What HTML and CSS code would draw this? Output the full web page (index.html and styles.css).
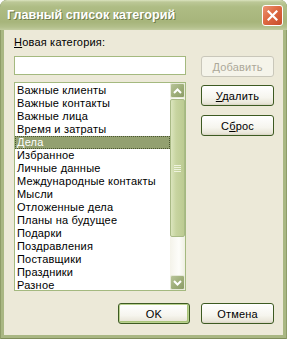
FILE: index.html
```html
<!DOCTYPE html>
<html lang="ru">

<head>
  <meta charset="UTF-8" />
  <title>Главный список категорий</title>
  <link rel="stylesheet" href="styles.css">
</head>

<body>
  <div class="window">
    <div class="titlebar">
      <span class="title">Главный список категорий</span>
      <span class="close">
        <svg width="11" height="11" viewBox="0 0 11 11">
          <path d="M1.5 1.5 L9.5 9.5 M9.5 1.5 L1.5 9.5" stroke="#fff" stroke-width="2.2" stroke-linecap="square" />
        </svg>
      </span>
    </div>

    <div class="client">
      <div class="main">
        <div class="left">
          <label class="label" for="category"><u>Н</u>овая категория:</label>
          <input class="field" type="text" id="category" />

          <div class="listbox">
            <ul class="items">
              <li>Важные клиенты</li>
              <li>Важные контакты</li>
              <li>Важные лица</li>
              <li>Время и затраты</li>
              <li class="selected">Дела</li>
              <li>Избранное</li>
              <li>Личные данные</li>
              <li>Международные контакты</li>
              <li>Мысли</li>
              <li>Отложенные дела</li>
              <li>Планы на будущее</li>
              <li>Подарки</li>
              <li>Поздравления</li>
              <li>Поставщики</li>
              <li>Праздники</li>
              <li>Разное</li>
            </ul>
            <div class="scrollbar">
              <div class="sb-btn">
                <svg width="9" height="6" viewBox="0 0 9 6">
                  <path d="M1 5 L4.5 1.5 L8 5" fill="none" stroke="#fff" stroke-width="2" />
                </svg>
              </div>
              <div class="sb-track">
                <div class="sb-thumb"><span class="grip"></span></div>
              </div>
              <div class="sb-btn">
                <svg width="9" height="6" viewBox="0 0 9 6">
                  <path d="M1 1 L4.5 4.5 L8 1" fill="none" stroke="#fff" stroke-width="2" />
                </svg>
              </div>
            </div>
          </div>
        </div>

        <div class="right">
          <button class="btn" disabled><u>Д</u>обавить</button>
          <button class="btn"><u>У</u>далить</button>
          <button class="btn reset">С<u>б</u>рос</button>
        </div>
      </div>

      <div class="footer">
        <button class="btn ok">OK</button>
        <button class="btn cancel">Отмена</button>
      </div>
    </div>
  </div>
</body>

</html>
```

FILE: styles.css
```css
body {
  margin: 0;
  background: #ffffff;
  font-family: "Liberation Sans", Arial, sans-serif;
  font-size: 11px;
  color: #000;
}

.window {
  width: 287px;
  height: 339px;
  background: #a9b783;
  border-radius: 7px 7px 0 0;
  overflow: hidden;
  box-shadow: inset 1px 0 0 #8e9c68, inset -1px 0 0 #8e9c68, inset 0 -1px 0 #7f8d5a;
}

.titlebar {
  height: 30px;
  display: flex;
  align-items: flex-start;
  justify-content: space-between;
  padding: 0 4px 0 7px;
  box-sizing: border-box;
  border-radius: 7px 7px 0 0;
  background: linear-gradient(to bottom, #dbe3c0 0, #bcc897 2px, #aebc84 7px, #a7b57b 22px, #b2bf8b 27px, #c2cc9f 30px);
}

.title {
  margin-top: 8px;
  font-weight: bold;
  font-size: 12.6px;
  line-height: 15px;
  color: #fff;
  text-shadow: 1px 1px 0 #6f7c4a;
}

.close {
  margin-top: 5px;
  width: 21px;
  height: 21px;
  box-sizing: border-box;
  border: 1px solid #fff;
  border-radius: 3px;
  background: linear-gradient(135deg, #ec9473 0, #de6a42 45%, #c84d2a 100%);
  display: flex;
  align-items: center;
  justify-content: center;
}

.client {
  margin: 0 4px;
  height: 305px;
  background: #ece9d8;
  padding: 6px 9px 0 10px;
  box-sizing: border-box;
}

.main {
  display: flex;
  gap: 15px;
}

.left {
  width: 172px;
}

.label {
  display: block;
  line-height: 13px;
  letter-spacing: 0.2px;
}

.field {
  display: block;
  width: 172px;
  height: 19px;
  margin: 7px 0 0;
  box-sizing: border-box;
  border: 1px solid #a4b97f;
  background: #fff;
  padding: 0 2px;
  font: inherit;
}

.listbox {
  display: flex;
  margin-top: 7px;
  width: 172px;
  height: 209px;
  box-sizing: border-box;
  border: 1px solid #a4b97f;
  background: #fff;
}

.items {
  flex: 1;
  list-style: none;
  margin: 0;
  padding: 1px 0 0;
  overflow: hidden;
}

.items li {
  line-height: 13px;
  height: 13px;
  padding-left: 2px;
  white-space: nowrap;
  letter-spacing: 0.2px;
}

.items .selected {
  background: #93a070;
  color: #fff;
  outline: 1px dotted #4a5530;
  outline-offset: -1px;
}

.scrollbar {
  width: 15px;
  display: flex;
  flex-direction: column;
  background: linear-gradient(to right, #f4f3ea, #fdfdfa 60%, #eef0e2);
}

.sb-btn {
  height: 15px;
  box-sizing: border-box;
  border: 1px solid #e6ead9;
  border-radius: 2px;
  background: linear-gradient(135deg, #b8c499 0, #9dad78 55%, #8c9c68 100%);
  display: flex;
  align-items: center;
  justify-content: center;
}

.sb-track {
  flex: 1;
}

.sb-thumb {
  margin-top: 1px;
  height: 138px;
  box-sizing: border-box;
  border: 1px solid #a9ba86;
  border-radius: 2px;
  background: linear-gradient(to right, #dbe5bd 0, #c7d4a0 40%, #bccb92 100%);
  display: flex;
  align-items: center;
  justify-content: center;
}

.grip {
  width: 7px;
  height: 7px;
  background: repeating-linear-gradient(to bottom, #eef3dd 0, #eef3dd 1px, transparent 1px, transparent 2px);
}

.right {
  width: 73px;
  padding-top: 20px;
  display: flex;
  flex-direction: column;
  gap: 8px;
}

.btn {
  width: 73px;
  height: 21px;
  box-sizing: border-box;
  border: 1px solid #3d5a22;
  border-radius: 3px;
  background: linear-gradient(to bottom, #ffffff 0, #f6f5ee 60%, #e9e6d9 90%, #d8d3c3 100%);
  font: inherit;
  letter-spacing: 0.2px;
  color: #000;
  padding: 0;
}

.btn:disabled {
  border-color: #c9c7ba;
  background: #f5f4ea;
  color: #aca899;
}

.reset {
  margin-top: 1px;
}

.footer {
  display: flex;
  justify-content: flex-end;
  gap: 11px;
  margin-top: 12px;
}

.ok {
  width: 72px;
  box-shadow: inset 0 0 0 1px #b9d18f, inset -1px -1px 0 1px #a9c47a;
}
```
